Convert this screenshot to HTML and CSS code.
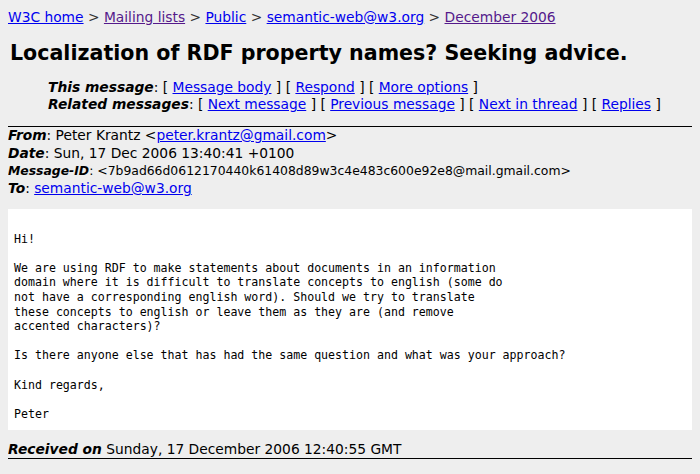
FILE: index.html
```html
<!DOCTYPE html>
<html lang="en">
<head>
<meta charset="utf-8">
<title>Localization of RDF property names? Seeking advice. from Peter Krantz on 2006-12-17 (semantic-web@w3.org from December 2006)</title>
<link rel="stylesheet" href="styles.css">
</head>
<body>
<div class="crumbs"><a href="#">W3C home</a> <span class="sep">&gt;</span> <a class="visited" href="#">Mailing lists</a> <span class="sep">&gt;</span> <a href="#">Public</a> <span class="sep">&gt;</span> <a href="#">semantic-web@w3.org</a> <span class="sep">&gt;</span> <a class="visited" href="#">December 2006</a></div>
<h1 class="title">Localization of RDF property names? Seeking advice.</h1>
<div class="nav">
  <div class="nav-row"><span class="lbl">This message</span>: [ <a href="#">Message body</a> ] [ <a href="#">Respond</a> ] [ <a href="#">More options</a> ]</div>
  <div class="nav-row"><span class="lbl">Related messages</span>: [ <a href="#">Next message</a> ] [ <a href="#">Previous message</a> ] [ <a href="#">Next in thread</a> ] [ <a href="#">Replies</a> ]</div>
</div>
<div class="rule"></div>
<div class="headers">
  <div class="hrow"><span class="lbl">From</span>: Peter Krantz &lt;<a href="#">peter.krantz@gmail.com</a>&gt;</div>
  <div class="hrow"><span class="lbl">Date</span>: Sun, 17 Dec 2006 13:40:41 +0100</div>
  <div class="hrow small"><span class="lbl">Message-ID</span>: &lt;7b9ad66d0612170440k61408d89w3c4e483c600e92e8@mail.gmail.com&gt;</div>
  <div class="hrow"><span class="lbl">To</span>: <a href="#">semantic-web@w3.org</a></div>
</div>
<pre class="body">

Hi!

We are using RDF to make statements about documents in an information
domain where it is difficult to translate concepts to english (some do
not have a corresponding english word). Should we try to translate
these concepts to english or leave them as they are (and remove
accented characters)?

Is there anyone else that has had the same question and what was your approach?

Kind regards,

Peter
</pre>
<div class="received"><span class="lbl">Received on</span> Sunday, 17 December 2006 12:40:55 GMT</div>
</body>
</html>
```

FILE: styles.css
```css
html {
  background: #eeeeee;
}
body {
  margin: 8px;
  background: #eeeeee;
  color: #000000;
  font-family: "DejaVu Sans", Verdana, sans-serif;
  font-size: 13.8px;
}
a {
  color: #0000ee;
  text-decoration: underline;
}
a.visited {
  color: #551a8b;
}
.crumbs {
  line-height: 18px;
}
.sep {
  color: #333333;
}
.title {
  margin: 14px 0 0 2px;
  font-size: 20.6px;
  line-height: 26px;
  font-weight: bold;
}
.nav {
  margin: 13px 0 0 40px;
  line-height: 17px;
}
.lbl {
  font-weight: bold;
  font-style: italic;
}
.rule {
  margin-top: 13px;
  border-top: 1px solid #000000;
}
.headers {
  margin-top: -1px;
  line-height: 18px;
}
.hrow.small {
  font-size: 12.4px;
  line-height: 17px;
}
.body {
  margin: 12px 0 0 0;
  padding: 8px 6px 9px 6px;
  background: #ffffff;
  font-family: "DejaVu Sans Mono", monospace;
  font-size: 11.6px;
  line-height: 14.6px;
}
.received {
  margin-top: 10px;
  line-height: 18px;
  border-bottom: 1px solid #000000;
}
```
